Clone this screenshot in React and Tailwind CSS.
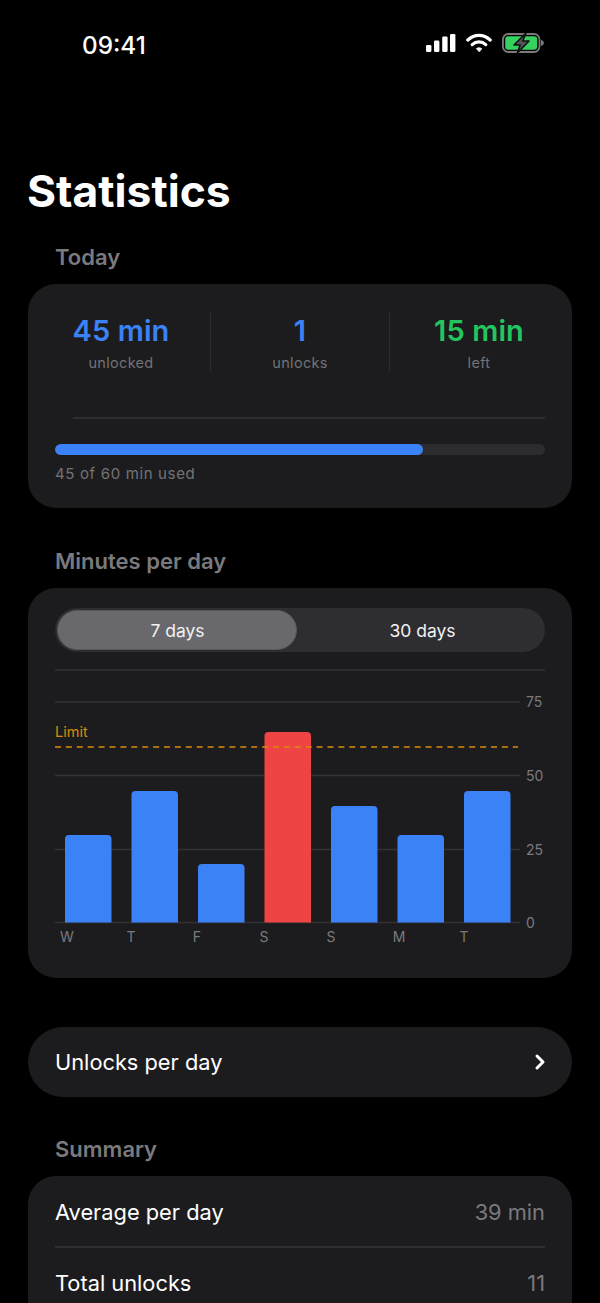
import React from "react";
import { ChevronRight } from "lucide-react";

const font = { fontFamily: "Inter, 'Noto Sans', sans-serif" };

function StatusIcons() {
  return (
    <div className="flex items-center gap-[10px] h-[24px]">
      <svg width="30" height="20" viewBox="0 0 30 20" fill="#fff">
        <rect x="0" y="12" width="5.4" height="7" rx="1.3" />
        <rect x="8" y="7.6" width="5.4" height="11.4" rx="1.3" />
        <rect x="16.2" y="3.4" width="5.4" height="15.6" rx="1.3" />
        <rect x="24" y="1" width="5.4" height="18" rx="1.3" />
      </svg>
      <svg width="26" height="20" viewBox="0 0 26 20" fill="none" stroke="#fff" strokeWidth="3.2" strokeLinecap="round">
        <path d="M1.8 7 C8.6 0.8 17.4 0.8 24.2 7" />
        <path d="M6.2 11.6 C10.2 8 15.8 8 19.8 11.6" />
        <path d="M13 18.6 L10.4 15.6 C11.8 14.5 14.2 14.5 15.6 15.6 Z" fill="#fff" strokeWidth="0.8" strokeLinejoin="round" />
      </svg>
      <svg width="42" height="20" viewBox="0 0 42 20">
        <rect x="0.9" y="1" width="36.6" height="18" rx="5.4" fill="none" stroke="#7a7a7a" strokeWidth="1.8" />
        <rect x="3.2" y="3.3" width="32" height="13.4" rx="3.2" fill="#36d25f" />
        <path d="M39 7 C41 7.4 41.8 8.6 41.8 10 C41.8 11.4 41 12.6 39 13 Z" fill="#7a7a7a" />
        <path d="M24 0 L12 12 H18.2 L15.4 20 L27 8 H20.8 Z" fill="#555555" stroke="#111111" strokeWidth="1.6" strokeLinejoin="round" />
      </svg>
    </div>
  );
}

function Stat({ value, label, color, last }) {
  return (
    <div className={`flex-1 h-[60px] flex flex-col items-center ${last ? "" : "border-r border-[#2b2b2d]"}`}>
      <div className={`text-[29px] leading-[38px] tracking-[0.1px] font-semibold ${color}`}>{value}</div>
      <div className="mt-[3px] text-[14.5px] leading-[20px] tracking-[0.3px] text-[#737377]">{label}</div>
    </div>
  );
}

const SectionTitle = ({ children, className = "" }) => (
  <h2 className={`px-[55px] text-[22px] leading-[28px] font-semibold text-[#7a7a7e] ${className}`}>{children}</h2>
);

function Chart() {
  const bars = [
    [10, 175, "#3b82f6", "W", 12],
    [76.5, 131, "#3b82f6", "T", 76],
    [143, 204, "#3b82f6", "F", 142],
    [209.5, 72, "#ef4444", "S", 209],
    [276, 146, "#3b82f6", "S", 276],
    [342.5, 175, "#3b82f6", "M", 344],
    [409, 131, "#3b82f6", "T", 409],
  ];
  const base = 262.5;
  const grid = "#323234";
  return (
    <svg width="490" height="290" viewBox="0 0 490 290" className="block" style={font}>
      <line x1="0" x2="490" y1="10" y2="10" stroke={grid} strokeWidth="1.6" />
      {[42, 115.5, 189.5, 262.5].map((y) => (
        <line key={y} x1="0" x2="465" y1={y} y2={y} stroke={grid} strokeWidth="1.6" />
      ))}
      {[[42, "75"], [115.5, "50"], [189.5, "25"], [262.5, "0"]].map(([y, t]) => (
        <text key={t} x="471" y={y + 5} fontSize="14" fill="#7a7a7e">{t}</text>
      ))}
      {bars.map(([x, top, c], i) => (
        <path key={i} d={`M${x} ${base} V${top + 4} Q${x} ${top} ${x + 4} ${top} H${x + 42.5} Q${x + 46.5} ${top} ${x + 46.5} ${top + 4} V${base} Z`} fill={c} />
      ))}
      {bars.map(([, , , l, cx], i) => (
        <text key={i} x={cx} y="282" fontSize="14" fill="#7a7a7e" textAnchor="middle">{l}</text>
      ))}
      <text x="0" y="77" fontSize="14.5" fill="#d98b0c">Limit</text>
      <line x1="0" x2="463" y1="87" y2="87" stroke="#d98b0c" strokeWidth="1.6" strokeDasharray="6 4.9" />
    </svg>
  );
}

export default function App() {
  return (
    <div className="w-[600px] h-[1303px] overflow-hidden bg-black text-white" style={font}>
      <div className="h-[88px] pl-[82px] pr-[56px] pt-[30px] flex items-start justify-between">
        <span className="text-[24.3px] leading-[30px] font-medium">09:41</span>
        <div className="pt-[1px]"><StatusIcons /></div>
      </div>

      <h1 className="mt-[74px] pl-[27px] text-[44.4px] leading-[58px] font-bold text-white">Statistics</h1>

      <SectionTitle className="mt-[23px]">Today</SectionTitle>
      <section className="mx-[28px] mt-[13px] h-[224px] rounded-[28px] bg-[#1c1c1e] px-[27px] pt-[28px]">
        <div className="-mx-[23px] flex">
          <Stat value="45 min" label="unlocked" color="text-[#3b82f6]" />
          <Stat value="1" label="unlocks" color="text-[#3b82f6]" />
          <Stat value="15 min" label="left" color="text-[#22c55e]" last />
        </div>
        <div className="mt-[45px] ml-[18px] h-[2px] bg-[#2e2e30]" />
        <div className="mt-[25px] h-[11px] rounded-full bg-[#2c2c2e] overflow-hidden">
          <div className="h-full w-[368px] rounded-full bg-[#3b82f6]" />
        </div>
        <p className="mt-[9px] text-[15px] leading-[20px] tracking-[0.65px] text-[#737377]">45 of 60 min used</p>
      </section>

      <SectionTitle className="mt-[39px]">Minutes per day</SectionTitle>
      <section className="mx-[28px] mt-[13px] h-[390px] rounded-[28px] bg-[#1c1c1e] px-[27px] pt-[20px]">
        <div className="h-[44px] rounded-[22px] bg-[#2e2e32] p-[2px] flex">
          <div className="w-[240px] h-[40px] pt-[2px] pl-[1px] rounded-[20px] bg-[#68686d] border-[1.5px] border-[#56565b] flex items-center justify-center text-[17.5px] font-normal text-[#f2f2f2]">7 days</div>
          <div className="flex-1 pt-[2px] pl-[5px] flex items-center justify-center text-[17.5px] font-normal text-[#f2f2f2]">30 days</div>
        </div>
        <div className="mt-[8px]"><Chart /></div>
      </section>

      <div className="mx-[28px] mt-[49px] h-[70px] rounded-[35px] bg-[#1c1c1e] pl-[27px] pr-[20px] flex items-center justify-between">
        <span className="text-[21.8px] font-normal">Unlocks per day</span>
        <ChevronRight size={24} strokeWidth={3} />
      </div>

      <SectionTitle className="mt-[38px]">Summary</SectionTitle>
      <section className="mx-[28px] mt-[13px] h-[200px] rounded-[28px] bg-[#1c1c1e] px-[27px]">
        <div className="h-[72px] pt-[2px] flex items-center justify-between border-b-[2px] border-[#2e2e30]">
          <span className="text-[21.8px]">Average per day</span>
          <span className="text-[21.8px] text-[#7a7a7e]">39 min</span>
        </div>
        <div className="h-[70px] flex items-center justify-between">
          <span className="text-[21.8px]">Total unlocks</span>
          <span className="text-[21.8px] text-[#7a7a7e]">11</span>
        </div>
      </section>
    </div>
  );
}
